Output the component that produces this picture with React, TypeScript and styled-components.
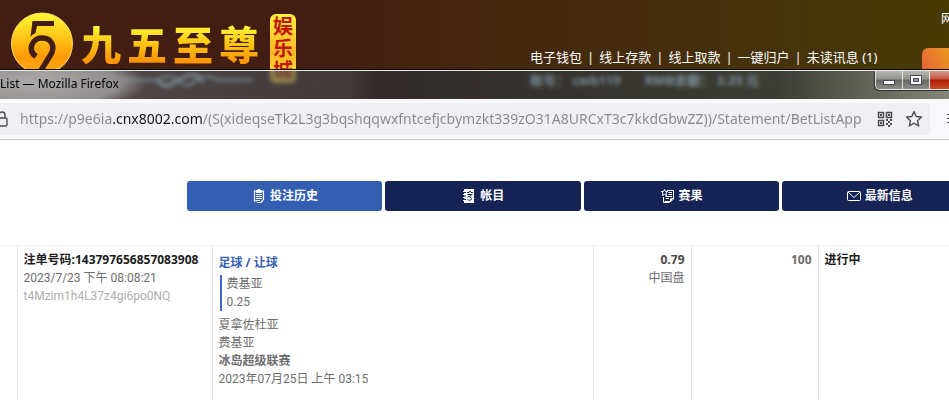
import React from "react";
import styled, { createGlobalStyle } from "styled-components";

const GlobalStyle = createGlobalStyle`
  * { box-sizing: border-box; }
  body {
    margin: 0;
    background: #fff;
    color: #6b6b6b;
    font: 12px/18px "Open Sans", "Noto Sans CJK SC", sans-serif;
    overflow: hidden;
  }
  button, input { font: inherit; }
`;

const SiteHeader = styled.header`
  display: flex;
  align-items: flex-start;
  height: 100px;
  padding-left: 10px;
  background: linear-gradient(90deg, #421d11 0%, #421d11 32%, #452b0d 63%, #463409 85%, #483a04 100%);
  overflow: hidden;
  white-space: nowrap;
`;

const Emblem = styled.svg`
  flex: none;
  width: 64px;
  height: 64px;
  margin-top: 12px;
`;

const BrandBlock = styled.div`
  flex: none;
  margin: 20px 0 0 7px;
`;

const Brand = styled.h1`
  display: flex;
  gap: 6px;
  margin: 0;
  font: 900 40px/46px "Noto Sans CJK SC", sans-serif;
  background: linear-gradient(#fffb3c 10%, #ffc713 50%, #ff9203 92%);
  background-clip: text;
  -webkit-background-clip: text;
  color: transparent;
`;

const Flourish = styled.svg`
  display: block;
  width: 140px;
  height: 20px;
  margin: 5px 0 0 36px;
`;

const BrandBadge = styled.span`
  flex: none;
  width: 26px;
  height: 69px;
  margin: 14px 0 0 11px;
  padding: 1px 3px;
  border-radius: 6px;
  background: linear-gradient(#fff23c, #ffb728 55%, #ffe533);
  color: #c01808;
  font: 700 20px/22px "Noto Sans CJK SC", sans-serif;
  white-space: normal;
`;

const AccountArea = styled.div`
  flex: none;
  width: 352px;
  margin: 0 40px 0 auto;
  padding-top: 48px;
  color: #fff;
`;

const QuickLinks = styled.nav`
  display: flex;
  gap: 5px;
  font: 13px/18px "Noto Sans", "Noto Sans CJK SC", sans-serif;
  a { color: inherit; text-decoration: none; }
`;

const AccountInfo = styled.div`
  display: flex;
  gap: 24px;
  margin-top: 5px;
  color: #e8f8ff;
  font: 700 13px/18px "Open Sans", "Noto Sans CJK SC", sans-serif;
`;

const HeaderEdge = styled.div`
  flex: none;
  width: 27px;
  overflow: hidden;
  color: #fff;
`;

const EdgeLink = styled.a`
  display: block;
  padding: 10px 0 20px 19px;
  color: inherit;
  text-decoration: none;
`;

const EdgeButton = styled.button`
  display: block;
  width: 100px;
  height: 36px;
  border: 0;
  border-radius: 6px 0 0 0;
  background: linear-gradient(60deg, #e5593b, #eaa01d 45%);
`;

const BrowserWindow = styled.section`
  position: relative;
  margin-top: -31px;
  border-top: 1px solid #100b05;
`;

const TitleBar = styled.div`
  display: flex;
  justify-content: space-between;
  height: 29px;
  border-top: 1px solid #e2e8e6;
  background:
    radial-gradient(ellipse 110px 30px at 36px 12px, rgba(176,174,174,.95), rgba(160,158,158,.8) 75%, transparent),
    linear-gradient(90deg, rgba(110,112,116,.7) 0, rgba(86,98,106,.6) 150px, rgba(63,76,84,.6) 350px, rgba(39,51,62,.6) 375px, rgba(46,60,72,.6) 65%, rgba(53,69,80,.6) 82%, rgba(140,141,135,.9) 100%);
  backdrop-filter: blur(2px);
`;

const WindowTitle = styled.span`
  color: #000;
  font: 12px/26px "Noto Sans", sans-serif;
`;

const WindowControls = styled.div`
  display: flex;
  width: 74px;
  height: 19px;
  overflow: hidden;
  border: 1px solid #e4e6e4;
  border-width: 0 0 1px 1px;
  border-radius: 0 0 0 5px;
  box-shadow: -1px 1px 0 #30302e;
`;

const WindowButton = styled.button<{ $close?: boolean }>`
  display: flex;
  flex: none;
  align-items: center;
  justify-content: center;
  width: ${(p) => (p.$close ? 46 : 27)}px;
  padding: 0;
  border: 0;
  border-right: 1px solid #dfe1df;
  background: ${(p) =>
    p.$close
      ? "linear-gradient(#d79a8e, #c4533d 45%, #ac1d06 50%, #ca4c26)"
      : "linear-gradient(#b7b8b4, #92938f 45%, #676864 50%, #8c8d89)"};
`;

const AddressRow = styled.form`
  display: flex;
  align-items: center;
  height: 41px;
  margin: 0;
  background: #f9f9fb;
  border-bottom: 1px solid #ccccd0;
`;

const AddressField = styled.div`
  display: flex;
  flex: 1;
  align-items: center;
  min-width: 0;
  height: 32px;
  padding-right: 7px;
  border-radius: 0 4px 4px 0;
  background: #f0f0f4;
  color: #4c4b52;
`;

const AddressInput = styled.input`
  flex: 1;
  min-width: 0;
  height: 28px;
  margin: 0 0 0 11px;
  padding: 0;
  border: 0;
  outline: 0;
  font: 14px/28px "Noto Sans", sans-serif;
  color: transparent;
  background: linear-gradient(90deg, #88878e 93px, #15141a 93px, #15141a 182px, #88878e 182px);
  background-clip: text;
  -webkit-background-clip: text;
`;

const IconButton = styled.button`
  display: flex;
  flex: none;
  margin: 0;
  padding: 0 6px;
  border: 0;
  background: none;
  color: inherit;
  &:last-child { padding-right: 0; }
`;

const LockIcon = styled.svg`
  flex: none;
  width: 9px;
  height: 18px;
`;

const MenuButton = styled.button`
  display: flex;
  flex: none;
  width: 19px;
  padding: 0 0 0 17px;
  border: 0;
  background: none;
  overflow: hidden;
  color: #4c4b52;
  svg { flex: none; }
`;

const Tabs = styled.nav`
  display: flex;
  gap: 3px;
  margin: 41px -28px 34px 187px;
`;

const Tab = styled.button<{ $active?: boolean }>`
  display: flex;
  flex: 1;
  align-items: center;
  justify-content: center;
  gap: 4px;
  height: 30px;
  padding: 0 0 0 1px;
  border: 0;
  border-radius: 3px;
  background: ${(p) => (p.$active ? "#345eb1" : "#152454")};
  color: #fff;
  font-weight: 700;
`;

const BetTable = styled.table`
  width: 100%;
  height: 155px;
  table-layout: fixed;
  border-collapse: collapse;
  border-top: 1px solid #f4f4f4;
`;

const Cell = styled.td<{ $right?: boolean }>`
  padding: 5px 6px;
  border-left: 1px solid #e6e6e6;
  vertical-align: top;
  text-align: ${(p) => (p.$right ? "right" : "left")};
  white-space: nowrap;
  &:first-child { border-left: 0; padding: 0; }
`;

const Line = styled.div<{ $tone?: string; $bold?: boolean }>`
  color: ${(p) => p.$tone ?? "#6e6e6e"};
  font-weight: ${(p) => (p.$bold ? 700 : 400)};
  font-family: ${(p) => (p.$bold ? '"Open Sans"' : "Roboto")}, "Noto Sans CJK SC", sans-serif;
`;

const BetType = styled(Line)`
  padding: 3px 0;
`;

const Selection = styled.div`
  margin: 0 0 5px 1px;
  padding-left: 5px;
  border-left: 2px solid #4169d0;
`;

const ClipboardIcon = () => (
  <svg width="14" height="14" viewBox="0 0 14 14" fill="none" stroke="#fff" aria-hidden="true">
    <path d="M4.5 2H2.5v10h2M9.5 2h2v8.500l-2.500 3h-4" strokeWidth="1.200" />
    <path d="M4.500 3.500v-2h1.500v-1h2v1h1.500v2z" fill="#fff" />
    <path d="M4 5.500h6M4 7.500h6M4 9.500h6M4 11.500h4" />
  </svg>
);

const LedgerIcon = () => (
  <svg width="14" height="14" viewBox="0 0 14 14" aria-hidden="true">
    <path d="M2 0h10v14H2v-2H1v-1h1V9H1V8h1V6H1V5h1V3H1V2h1z" fill="#fff" />
    <path d="M1 3.500h3M1 7h3M1 10.500h3M5 3.500h2l1-1.500 1 1.500h2M5.500 5.500h5M9.500 5.500c0 2-4 1.500-4 3M6.500 7l3 2c1 2-2 3-4 1.500" stroke="#152454" fill="none" />
  </svg>
);

const ResultIcon = () => (
  <svg width="14" height="14" viewBox="0 0 14 14" fill="none" stroke="#fff" aria-hidden="true">
    <path d="M6 1.500h6.500v8.500l-2.500 2.500H3.500M2.500 8v5.500h6l2-2V9.500h2M9.500 12.500v-3" />
    <path d="M3.500.5l1 2h2L5 4l.5 2.500-2-1-2 1L2 4 .5 2.500h2z" />
    <path d="M7.500 3.500H11M7.500 5.500H11M4.500 7.500H11M4.500 9.500H8" />
  </svg>
);

const MailIcon = () => (
  <svg width="14" height="14" viewBox="0 0 14 14" fill="none" stroke="#fff" aria-hidden="true">
    <rect x=".5" y="2.500" width="13" height="9" rx="1" />
    <path d="M1 3l6 5.500L13 3" />
  </svg>
);

const tabs = [
  { label: "投注历史", icon: <ClipboardIcon />, active: true },
  { label: "帐目", icon: <LedgerIcon /> },
  { label: "赛果", icon: <ResultIcon /> },
  { label: "最新信息", icon: <MailIcon /> },
];

const links = ["电子钱包", "线上存款", "线上取款", "一键归户", "未读讯息 (1)"];

const columns = [17, 195, 381, 98, 127];

export default function App() {
  return (
    <>
      <GlobalStyle />
      <SiteHeader>
        <Emblem viewBox="0 0 64 64" aria-hidden="true">
          <defs>
            <linearGradient id="gold" x1="0" y1="0" x2="0" y2="1">
              <stop offset="0" stopColor="#fffa32" />
              <stop offset=".72" stopColor="#ff9a05" />
              <stop offset="1" stopColor="#ffa91a" />
            </linearGradient>
          </defs>
          <circle cx="32" cy="31.500" r="30.500" fill="url(#gold)" stroke="#ffdf6a" />
          <path d="M22.500 9H44v5H27l-1.500 7c-2 .8-3.500 2-5 4z" fill="#421d11" />
          <path d="M26 44.500C17 38 22 26 32 26c10 0 13.500 9 8.500 17L30 60" fill="none" stroke="#421d11" strokeWidth="5.500" />
        </Emblem>
        <BrandBlock>
          <Brand>
            {[..."九五至尊"].map((c) => (
              <span key={c}>{c}</span>
            ))}
          </Brand>
          <Flourish viewBox="0 0 140 20" fill="none" stroke="#b9d8e6" strokeWidth="3" aria-hidden="true">
            <path d="M4 9h36c10-6 18-4 22 1s10 6 16 0 12-6 22-1h36" strokeWidth="2" />
            <path d="M40 9q8 10 18 2l14-7q10-2 14 8" />
          </Flourish>
        </BrandBlock>
        <BrandBadge>娱乐城</BrandBadge>
        <AccountArea>
          <QuickLinks>
            {links.map((text, i) => (
              <React.Fragment key={text}>
                {i > 0 && <span>|</span>}
                <a href="#">{text}</a>
              </React.Fragment>
            ))}
          </QuickLinks>
          <AccountInfo>
            <span>账号： cwb119</span>
            <span>RMB余额： 3.25 元</span>
          </AccountInfo>
        </AccountArea>
        <HeaderEdge>
          <EdgeLink href="#">网</EdgeLink>
          <EdgeButton aria-label="登出" />
        </HeaderEdge>
      </SiteHeader>

      <BrowserWindow>
        <TitleBar>
          <WindowTitle>List — Mozilla Firefox</WindowTitle>
          <WindowControls>
            <WindowButton aria-label="Minimize">
              <svg width="14" height="12" viewBox="0 0 14 12" aria-hidden="true">
                <rect x="1.500" y="6.500" width="11" height="4" fill="#fff" stroke="#484c58" />
              </svg>
            </WindowButton>
            <WindowButton aria-label="Maximize">
              <svg width="14" height="12" viewBox="0 0 14 12" aria-hidden="true">
                <rect x="1.500" y="1.500" width="11" height="9" fill="#fff" stroke="#484c58" />
                <rect x="4.500" y="4.500" width="5" height="3" fill="#999" stroke="#484c58" />
              </svg>
            </WindowButton>
            <WindowButton $close aria-label="Close" />
          </WindowControls>
        </TitleBar>
        <AddressRow>
          <AddressField>
            <LockIcon viewBox="0 0 9 18" fill="none" stroke="currentColor" strokeWidth="1.400" aria-hidden="true">
              <path d="M-2 8H5.500q1.500 0 1.500 1.500v5Q7 16 5.500 16H-2M5 8V5q0-3-3-3T-1 5v3" />
            </LockIcon>
            <AddressInput
              aria-label="Address"
              readOnly
              value="https://p9e6ia.cnx8002.com/(S(xideqseTk2L3g3bqshqqwxfntcefjcbymzkt339zO31A8URCxT3c7kkdGbwZZ))/Statement/BetListApp"
            />
            <IconButton type="button" aria-label="QR code">
              <svg width="16" height="16" viewBox="0 0 16 16" fill="none" stroke="currentColor" strokeWidth="1.500" aria-hidden="true">
                <path d="M1.500 1.500h5v5h-5zM9.500 1.500h5v5h-5zM1.500 9.500h5v5h-5z" />
                <path d="M3 4h2M11 4h2M3 12h2M9 9h2M13 9h2M11 11h2M9 13h2M13 13h2M11 15h2" strokeWidth="2" />
              </svg>
            </IconButton>
            <IconButton type="button" aria-label="Bookmark">
              <svg width="18" height="18" viewBox="0 0 18 18" fill="none" stroke="currentColor" strokeWidth="1.400" strokeLinejoin="round" aria-hidden="true">
                <path d="M9 1.500l2.200 5 5.300.5-4 3.700 1.200 5.300L9 13.200 4.300 16l1.200-5.300-4-3.700 5.300-.5z" />
              </svg>
            </IconButton>
          </AddressField>
          <MenuButton type="button" aria-label="Menu">
            <svg width="14" height="12" viewBox="0 0 14 12" stroke="currentColor" aria-hidden="true">
              <path d="M0 1.500h14M0 5.500h14M0 9.500h14" />
            </svg>
          </MenuButton>
        </AddressRow>

        <Tabs>
          {tabs.map((t) => (
            <Tab key={t.label} $active={t.active}>
              {t.icon}
              {t.label}
            </Tab>
          ))}
        </Tabs>

        <BetTable>
          <colgroup>
            {columns.map((w) => (
              <col key={w} width={w} />
            ))}
            <col />
          </colgroup>
          <tbody>
            <tr>
              <Cell />
              <Cell>
                <Line $bold $tone="#1c1c1c">注单号码:143797656857083908</Line>
                <Line>2023/7/23 下午 08:08:21</Line>
                <Line $tone="#aeaeae">t4Mzim1h4L37z4gi6po0NQ</Line>
              </Cell>
              <Cell>
                <BetType $bold $tone="#345eb1">足球 / 让球</BetType>
                <Selection>
                  <Line>费基亚</Line>
                  <Line>0.25</Line>
                </Selection>
                <Line>夏拿佐杜亚</Line>
                <Line>费基亚</Line>
                <Line $bold>冰岛超级联赛</Line>
                <Line>2023年07月25日 上午 03:15</Line>
              </Cell>
              <Cell $right>
                <Line $bold $tone="#4a4a4a">0.79</Line>
                <Line>中国盘</Line>
              </Cell>
              <Cell $right>
                <Line $bold>100</Line>
              </Cell>
              <Cell>
                <Line $bold $tone="#1c1c1c">进行中</Line>
              </Cell>
            </tr>
          </tbody>
        </BetTable>
      </BrowserWindow>
    </>
  );
}
